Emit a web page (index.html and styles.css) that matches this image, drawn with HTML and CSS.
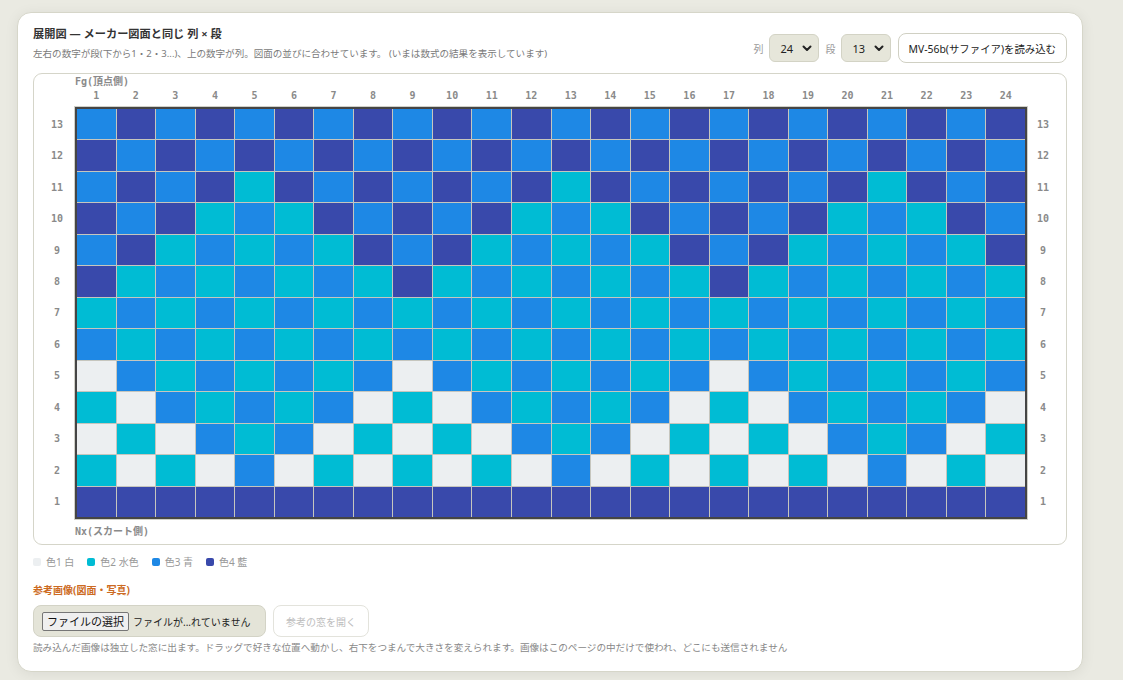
FILE: index.html
```html
<!DOCTYPE html>
<html lang="ja">
<head>
<meta charset="utf-8">
<title>展開図</title>
<link rel="stylesheet" href="styles.css">
</head>
<body>
<div class="page">
  <section class="card">
    <header class="head">
      <div class="head-text">
        <div class="title">展開図 — メーカー図面と同じ 列 × 段</div>
        <div class="sub">左右の数字が段(下から1・2・3...)、上の数字が列。図面の並びに合わせています。 (いまは数式の結果を表示しています)</div>
      </div>
      <div class="controls">
        <span class="lbl">列</span>
        <div class="sel"><span>24</span><svg width="10" height="7" viewBox="0 0 10 7"><path d="M1.5 1.5 L5 5 L8.5 1.5" stroke="#222" stroke-width="2" fill="none" stroke-linecap="round" stroke-linejoin="round"/></svg></div>
        <span class="lbl">段</span>
        <div class="sel"><span>13</span><svg width="10" height="7" viewBox="0 0 10 7"><path d="M1.5 1.5 L5 5 L8.5 1.5" stroke="#222" stroke-width="2" fill="none" stroke-linecap="round" stroke-linejoin="round"/></svg></div>
        <button class="btn-load">MV-56b(サファイア)を読み込む</button>
      </div>
    </header>

    <div class="panel">
      <div class="fg">Fg(頂点側)</div>
      <div class="colnums">
        <span>1</span><span>2</span><span>3</span><span>4</span><span>5</span><span>6</span><span>7</span><span>8</span><span>9</span><span>10</span><span>11</span><span>12</span><span>13</span><span>14</span><span>15</span><span>16</span><span>17</span><span>18</span><span>19</span><span>20</span><span>21</span><span>22</span><span>23</span><span>24</span>
      </div>
      <div class="rownums left">
        <span>13</span><span>12</span><span>11</span><span>10</span><span>9</span><span>8</span><span>7</span><span>6</span><span>5</span><span>4</span><span>3</span><span>2</span><span>1</span>
      </div>
      <div class="grid">
        <!-- 13 -->
        <i class=b></i><i class=n></i><i class=b></i><i class=n></i><i class=b></i><i class=n></i><i class=b></i><i class=n></i>
        <i class=b></i><i class=n></i><i class=b></i><i class=n></i><i class=b></i><i class=n></i><i class=b></i><i class=n></i>
        <i class=b></i><i class=n></i><i class=b></i><i class=n></i><i class=b></i><i class=n></i><i class=b></i><i class=n></i>
        <!-- 12 -->
        <i class=n></i><i class=b></i><i class=n></i><i class=b></i><i class=n></i><i class=b></i><i class=n></i><i class=b></i>
        <i class=n></i><i class=b></i><i class=n></i><i class=b></i><i class=n></i><i class=b></i><i class=n></i><i class=b></i>
        <i class=n></i><i class=b></i><i class=n></i><i class=b></i><i class=n></i><i class=b></i><i class=n></i><i class=b></i>
        <!-- 11 -->
        <i class=b></i><i class=n></i><i class=b></i><i class=n></i><i class=c></i><i class=n></i><i class=b></i><i class=n></i>
        <i class=b></i><i class=n></i><i class=b></i><i class=n></i><i class=c></i><i class=n></i><i class=b></i><i class=n></i>
        <i class=b></i><i class=n></i><i class=b></i><i class=n></i><i class=c></i><i class=n></i><i class=b></i><i class=n></i>
        <!-- 10 -->
        <i class=n></i><i class=b></i><i class=n></i><i class=c></i><i class=b></i><i class=c></i><i class=n></i><i class=b></i>
        <i class=n></i><i class=b></i><i class=n></i><i class=c></i><i class=b></i><i class=c></i><i class=n></i><i class=b></i>
        <i class=n></i><i class=b></i><i class=n></i><i class=c></i><i class=b></i><i class=c></i><i class=n></i><i class=b></i>
        <!-- 9 -->
        <i class=b></i><i class=n></i><i class=c></i><i class=b></i><i class=c></i><i class=b></i><i class=c></i><i class=n></i>
        <i class=b></i><i class=n></i><i class=c></i><i class=b></i><i class=c></i><i class=b></i><i class=c></i><i class=n></i>
        <i class=b></i><i class=n></i><i class=c></i><i class=b></i><i class=c></i><i class=b></i><i class=c></i><i class=n></i>
        <!-- 8 -->
        <i class=n></i><i class=c></i><i class=b></i><i class=c></i><i class=b></i><i class=c></i><i class=b></i><i class=c></i>
        <i class=n></i><i class=c></i><i class=b></i><i class=c></i><i class=b></i><i class=c></i><i class=b></i><i class=c></i>
        <i class=n></i><i class=c></i><i class=b></i><i class=c></i><i class=b></i><i class=c></i><i class=b></i><i class=c></i>
        <!-- 7 -->
        <i class=c></i><i class=b></i><i class=c></i><i class=b></i><i class=c></i><i class=b></i><i class=c></i><i class=b></i>
        <i class=c></i><i class=b></i><i class=c></i><i class=b></i><i class=c></i><i class=b></i><i class=c></i><i class=b></i>
        <i class=c></i><i class=b></i><i class=c></i><i class=b></i><i class=c></i><i class=b></i><i class=c></i><i class=b></i>
        <!-- 6 -->
        <i class=b></i><i class=c></i><i class=b></i><i class=c></i><i class=b></i><i class=c></i><i class=b></i><i class=c></i>
        <i class=b></i><i class=c></i><i class=b></i><i class=c></i><i class=b></i><i class=c></i><i class=b></i><i class=c></i>
        <i class=b></i><i class=c></i><i class=b></i><i class=c></i><i class=b></i><i class=c></i><i class=b></i><i class=c></i>
        <!-- 5 -->
        <i class=w></i><i class=b></i><i class=c></i><i class=b></i><i class=c></i><i class=b></i><i class=c></i><i class=b></i>
        <i class=w></i><i class=b></i><i class=c></i><i class=b></i><i class=c></i><i class=b></i><i class=c></i><i class=b></i>
        <i class=w></i><i class=b></i><i class=c></i><i class=b></i><i class=c></i><i class=b></i><i class=c></i><i class=b></i>
        <!-- 4 -->
        <i class=c></i><i class=w></i><i class=b></i><i class=c></i><i class=b></i><i class=c></i><i class=b></i><i class=w></i>
        <i class=c></i><i class=w></i><i class=b></i><i class=c></i><i class=b></i><i class=c></i><i class=b></i><i class=w></i>
        <i class=c></i><i class=w></i><i class=b></i><i class=c></i><i class=b></i><i class=c></i><i class=b></i><i class=w></i>
        <!-- 3 -->
        <i class=w></i><i class=c></i><i class=w></i><i class=b></i><i class=c></i><i class=b></i><i class=w></i><i class=c></i>
        <i class=w></i><i class=c></i><i class=w></i><i class=b></i><i class=c></i><i class=b></i><i class=w></i><i class=c></i>
        <i class=w></i><i class=c></i><i class=w></i><i class=b></i><i class=c></i><i class=b></i><i class=w></i><i class=c></i>
        <!-- 2 -->
        <i class=c></i><i class=w></i><i class=c></i><i class=w></i><i class=b></i><i class=w></i><i class=c></i><i class=w></i>
        <i class=c></i><i class=w></i><i class=c></i><i class=w></i><i class=b></i><i class=w></i><i class=c></i><i class=w></i>
        <i class=c></i><i class=w></i><i class=c></i><i class=w></i><i class=b></i><i class=w></i><i class=c></i><i class=w></i>
        <!-- 1 -->
        <i class=n></i><i class=n></i><i class=n></i><i class=n></i><i class=n></i><i class=n></i><i class=n></i><i class=n></i>
        <i class=n></i><i class=n></i><i class=n></i><i class=n></i><i class=n></i><i class=n></i><i class=n></i><i class=n></i>
        <i class=n></i><i class=n></i><i class=n></i><i class=n></i><i class=n></i><i class=n></i><i class=n></i><i class=n></i>
      </div>
      <div class="rownums right">
        <span>13</span><span>12</span><span>11</span><span>10</span><span>9</span><span>8</span><span>7</span><span>6</span><span>5</span><span>4</span><span>3</span><span>2</span><span>1</span>
      </div>
      <div class="nx">Nx(スカート側)</div>
    </div>

    <div class="legend">
      <span class="item"><i class="sw w"></i>色1 白</span>
      <span class="item"><i class="sw c"></i>色2 水色</span>
      <span class="item"><i class="sw b"></i>色3 青</span>
      <span class="item"><i class="sw n"></i>色4 藍</span>
    </div>

    <div class="ref-title">参考画像(図面・写真)</div>
    <div class="ref-row">
      <div class="filebox">
        <span class="filebtn">ファイルの選択</span>
        <span class="filename">ファイルが...れていません</span>
      </div>
      <button class="btn-open" disabled>参考の窓を開く</button>
    </div>
    <div class="note">読み込んだ画像は独立した窓に出ます。ドラッグで好きな位置へ動かし、右下をつまんで大きさを変えられます。画像はこのページの中だけで使われ、どこにも送信されません</div>
  </section>
</div>
</body>
</html>
```
FILE: styles.css
```css
html, body {
  margin: 0;
  padding: 0;
}
body {
  background: #eaeae2;
  font-family: "Noto Sans", "Noto Sans CJK JP", sans-serif;
  color: #333;
  height: 680px;
  overflow: hidden;
}
.page {
  padding: 12px 0 0 17px;
}
.card {
  width: 1066px;
  box-sizing: border-box;
  background: #fff;
  border: 1px solid #d6d6c9;
  border-radius: 14px;
  padding: 13px 15px 16px 15px;
  box-shadow: 0 2px 14px rgba(0, 0, 0, 0.07);
}

/* header */
.head {
  display: flex;
  justify-content: space-between;
  align-items: flex-end;
}
.title {
  font-size: 11.2px;
  font-weight: 700;
  line-height: 16px;
  color: #333;
}
.sub {
  font-size: 9.55px;
  line-height: 14px;
  color: #7a7a7a;
  margin-top: 5px;
  margin-bottom: 2px;
}
.controls {
  display: flex;
  align-items: center;
}
.lbl {
  font-size: 10px;
  color: #9a9a9a;
  margin-right: 5px;
}
.sel {
  display: flex;
  align-items: center;
  justify-content: space-between;
  width: 50px;
  height: 28px;
  box-sizing: border-box;
  padding: 0 6px 0 11px;
  margin-right: 7px;
  background: #e6e6da;
  border: 1px solid #d3d3c5;
  border-radius: 6px;
  font-size: 11px;
  color: #222;
}
.btn-load {
  height: 30px;
  padding: 0 10px;
  border: 1px solid #d0d0c3;
  border-radius: 8px;
  background: #fff;
  font-family: inherit;
  font-size: 10.4px;
  color: #222;
}

/* panel */
.panel {
  margin-top: 10px;
  border: 1px solid #d5d5c9;
  border-radius: 9px;
  padding: 0 9px 6px 7px;
  display: grid;
  grid-template-columns: 32px 952px 28px;
  column-gap: 2px;
  font-family: "DejaVu Sans Mono", "Noto Sans CJK JP", monospace;
  color: #8a8a8a;
}
.fg {
  grid-column: 2;
  font-size: 10px;
  font-weight: 700;
  line-height: 14px;
  margin-top: 1px;
}
.colnums {
  grid-column: 2;
  display: grid;
  grid-template-columns: repeat(24, 1fr);
  column-gap: 1px;
  padding: 0 2px;
  font-size: 10px;
  font-weight: 700;
  line-height: 14px;
  text-align: center;
  margin-bottom: 4px;
}
.rownums {
  display: grid;
  grid-template-rows: repeat(13, 1fr);
  row-gap: 1px;
  padding: 2px 0;
  height: 412px;
  box-sizing: border-box;
  font-size: 10px;
  font-weight: 700;
  align-items: center;
  text-align: center;
}
.rownums.left { grid-column: 1; }
.rownums.right { grid-column: 3; }
.grid {
  grid-column: 2;
  display: grid;
  grid-template-columns: repeat(24, 1fr);
  grid-template-rows: repeat(13, 1fr);
  gap: 1px;
  height: 412px;
  box-sizing: border-box;
  background: #c6c6be;
  border: 2px solid #454545;
  box-shadow: 0 0 0 1px #d0d0c8;
}
.grid i {
  display: block;
}
.w { background: #eceff1; }
.c { background: #00bcd4; }
.b { background: #1e88e5; }
.n { background: #3949ab; }
.nx {
  grid-column: 2;
  font-size: 10px;
  font-weight: 700;
  line-height: 12px;
  margin-top: 7px;
}

/* legend */
.legend {
  display: flex;
  gap: 13px;
  margin-top: 10px;
  font-size: 10px;
  line-height: 14px;
  color: #999;
}
.item {
  display: flex;
  align-items: center;
  gap: 5px;
}
.sw {
  display: block;
  width: 8px;
  height: 8px;
  border-radius: 2px;
}

/* reference image */
.ref-title {
  margin-top: 14px;
  font-size: 10px;
  font-weight: 700;
  line-height: 14px;
  color: #cc6a22;
}
.ref-row {
  display: flex;
  gap: 7px;
  margin-top: 8px;
}
.filebox {
  display: flex;
  align-items: center;
  gap: 4px;
  width: 233px;
  height: 32px;
  box-sizing: border-box;
  padding: 0 8px;
  background: #e4e4d8;
  border: 1px solid #d3d3c6;
  border-radius: 8px;
}
.filebtn {
  font-size: 11px;
  line-height: 17px;
  padding: 0 4px;
  color: #111;
  background: #efefef;
  border: 1px solid #767676;
  border-radius: 2px;
}
.filename {
  font-size: 10px;
  color: #222;
}
.btn-open {
  width: 96px;
  height: 32px;
  border: 1px solid #e3e3dc;
  border-radius: 8px;
  background: #fff;
  font-family: inherit;
  font-size: 10px;
  color: #bdbdbd;
}
.note {
  margin-top: 4px;
  font-size: 9.6px;
  line-height: 14px;
  color: #888;
}
```
